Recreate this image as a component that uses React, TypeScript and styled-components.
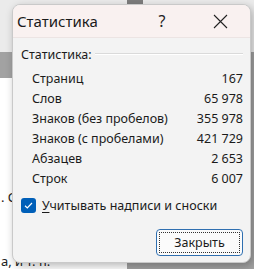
import styled, { createGlobalStyle } from "styled-components";

const GlobalStyle = createGlobalStyle`
  html, body {
    margin: 0;
    padding: 0;
  }
  body {
    font-family: "Noto Sans", "Open Sans", sans-serif;
    color: #1b1b1b;
  }
`;

const Screen = styled.div`
  position: relative;
  width: 254px;
  height: 269px;
  overflow: hidden;
  display: flex;
  flex-direction: column;
`;

const Ribbon = styled.div`
  height: 60px;
  background: #ebebeb;
  padding-left: 127px;
`;

const RibbonBlock = styled.div`
  width: 16px;
  height: 4px;
  background: #7d7d7d;
`;

const Canvas = styled.div`
  flex: 1;
  background: #a2a2a2;
  padding-top: 26px;
  display: flex;
`;

const DocPage = styled.div`
  width: 127px;
  background: #ffffff;
  display: flex;
  flex-direction: column;
  font-size: 13px;
  color: #222;
`;

const DocLine = styled.div<{ $top: number }>`
  margin-top: ${(p) => p.$top}px;
  line-height: 16px;
  white-space: nowrap;
  padding-left: 1px;
`;

const Dialog = styled.div`
  position: absolute;
  left: 12px;
  top: 4px;
  width: 239px;
  height: 259px;
  box-sizing: border-box;
  border: 1px solid #c9c9c9;
  border-radius: 8px;
  background: #f3f3f3;
  box-shadow: 2px 3px 8px rgba(0, 0, 0, 0.28);
  overflow: hidden;
  display: flex;
  flex-direction: column;
`;

const TitleBar = styled.div`
  height: 32px;
  background: #f9f1f0;
  display: flex;
  align-items: center;
  padding-left: 4px;
  border-bottom: 1px solid #ece4e3;
`;

const Title = styled.div`
  flex: 1;
  font-size: 15px;
  color: #1a1a1a;
`;

const TitleButton = styled.div<{ $w: number }>`
  width: ${(p) => p.$w}px;
  height: 32px;
  display: flex;
  align-items: center;
  justify-content: center;
  font-size: 16px;
  color: #222;
`;

const Body = styled.div`
  flex: 1;
  display: flex;
  flex-direction: column;
  padding: 8px 7px 0 8px;
  font-size: 12.5px;
`;

const GroupHeader = styled.div`
  display: flex;
  align-items: center;
  height: 16px;
  gap: 3px;
`;

const GroupLine = styled.div`
  flex: 1;
  height: 0;
  border-top: 1px solid #dadada;
  border-bottom: 1px solid #ffffff;
  margin-top: -1px;
`;

const Rows = styled.div`
  margin-top: 6px;
  padding-left: 11px;
  display: flex;
  flex-direction: column;
`;

const Row = styled.div`
  height: 20px;
  display: flex;
  align-items: center;
  justify-content: space-between;
`;

const CheckRow = styled.label`
  margin-top: 9px;
  height: 16px;
  display: flex;
  align-items: center;
  gap: 6px;
`;

const CheckBox = styled.span`
  width: 15px;
  height: 15px;
  border-radius: 3px;
  background: #005fb8;
  display: flex;
  align-items: center;
  justify-content: center;
`;

const Accel = styled.span`
  text-decoration: underline;
  text-underline-offset: 2px;
`;

const Footer = styled.div`
  margin-top: 16px;
  display: flex;
  justify-content: flex-end;
`;

const CloseBtn = styled.button`
  width: 87px;
  height: 27px;
  box-sizing: border-box;
  border: 1px solid #2f6fb0;
  border-radius: 4px;
  background: #fbfbfb;
  padding: 2px;
  font-family: inherit;
  font-size: 12.5px;
  color: #1b1b1b;
  display: flex;
`;

const FocusRing = styled.span`
  flex: 1;
  border: 1px dotted #333;
  display: flex;
  align-items: center;
  justify-content: center;
`;

const stats: [string, string][] = [
  ["Страниц", "167"],
  ["Слов", "65 978"],
  ["Знаков (без пробелов)", "355 978"],
  ["Знаков (с пробелами)", "421 729"],
  ["Абзацев", "2 653"],
  ["Строк", "6 007"],
];

export default function App() {
  return (
    <>
      <GlobalStyle />
      <Screen>
        <Ribbon>
          <RibbonBlock />
        </Ribbon>
        <Canvas>
          <DocPage>
            <DocLine $top={111}>. С</DocLine>
            <DocLine $top={48}>а, и т. п.</DocLine>
          </DocPage>
        </Canvas>
        <Dialog>
          <TitleBar>
            <Title>Статистика</Title>
            <TitleButton $w={46}>?</TitleButton>
            <TitleButton $w={12} />
            <TitleButton $w={46}>
              <svg width="15" height="15" viewBox="0 0 15 15">
                <path d="M1 1 L14 14 M14 1 L1 14" stroke="#222" strokeWidth="1.1" />
              </svg>
            </TitleButton>
            <TitleButton $w={7} />
          </TitleBar>
          <Body>
            <GroupHeader>
              <span>Статистика:</span>
              <GroupLine />
            </GroupHeader>
            <Rows>
              {stats.map(([label, value]) => (
                <Row key={label}>
                  <span>{label}</span>
                  <span>{value}</span>
                </Row>
              ))}
            </Rows>
            <CheckRow>
              <CheckBox>
                <svg width="11" height="11" viewBox="0 0 11 11">
                  <path d="M2 5.8 L4.3 8 L9 3" fill="none" stroke="#fff" strokeWidth="1.2" />
                </svg>
              </CheckBox>
              <span>
                <Accel>У</Accel>читывать надписи и сноски
              </span>
            </CheckRow>
            <Footer>
              <CloseBtn>
                <FocusRing>Закрыть</FocusRing>
              </CloseBtn>
            </Footer>
          </Body>
        </Dialog>
      </Screen>
    </>
  );
}
